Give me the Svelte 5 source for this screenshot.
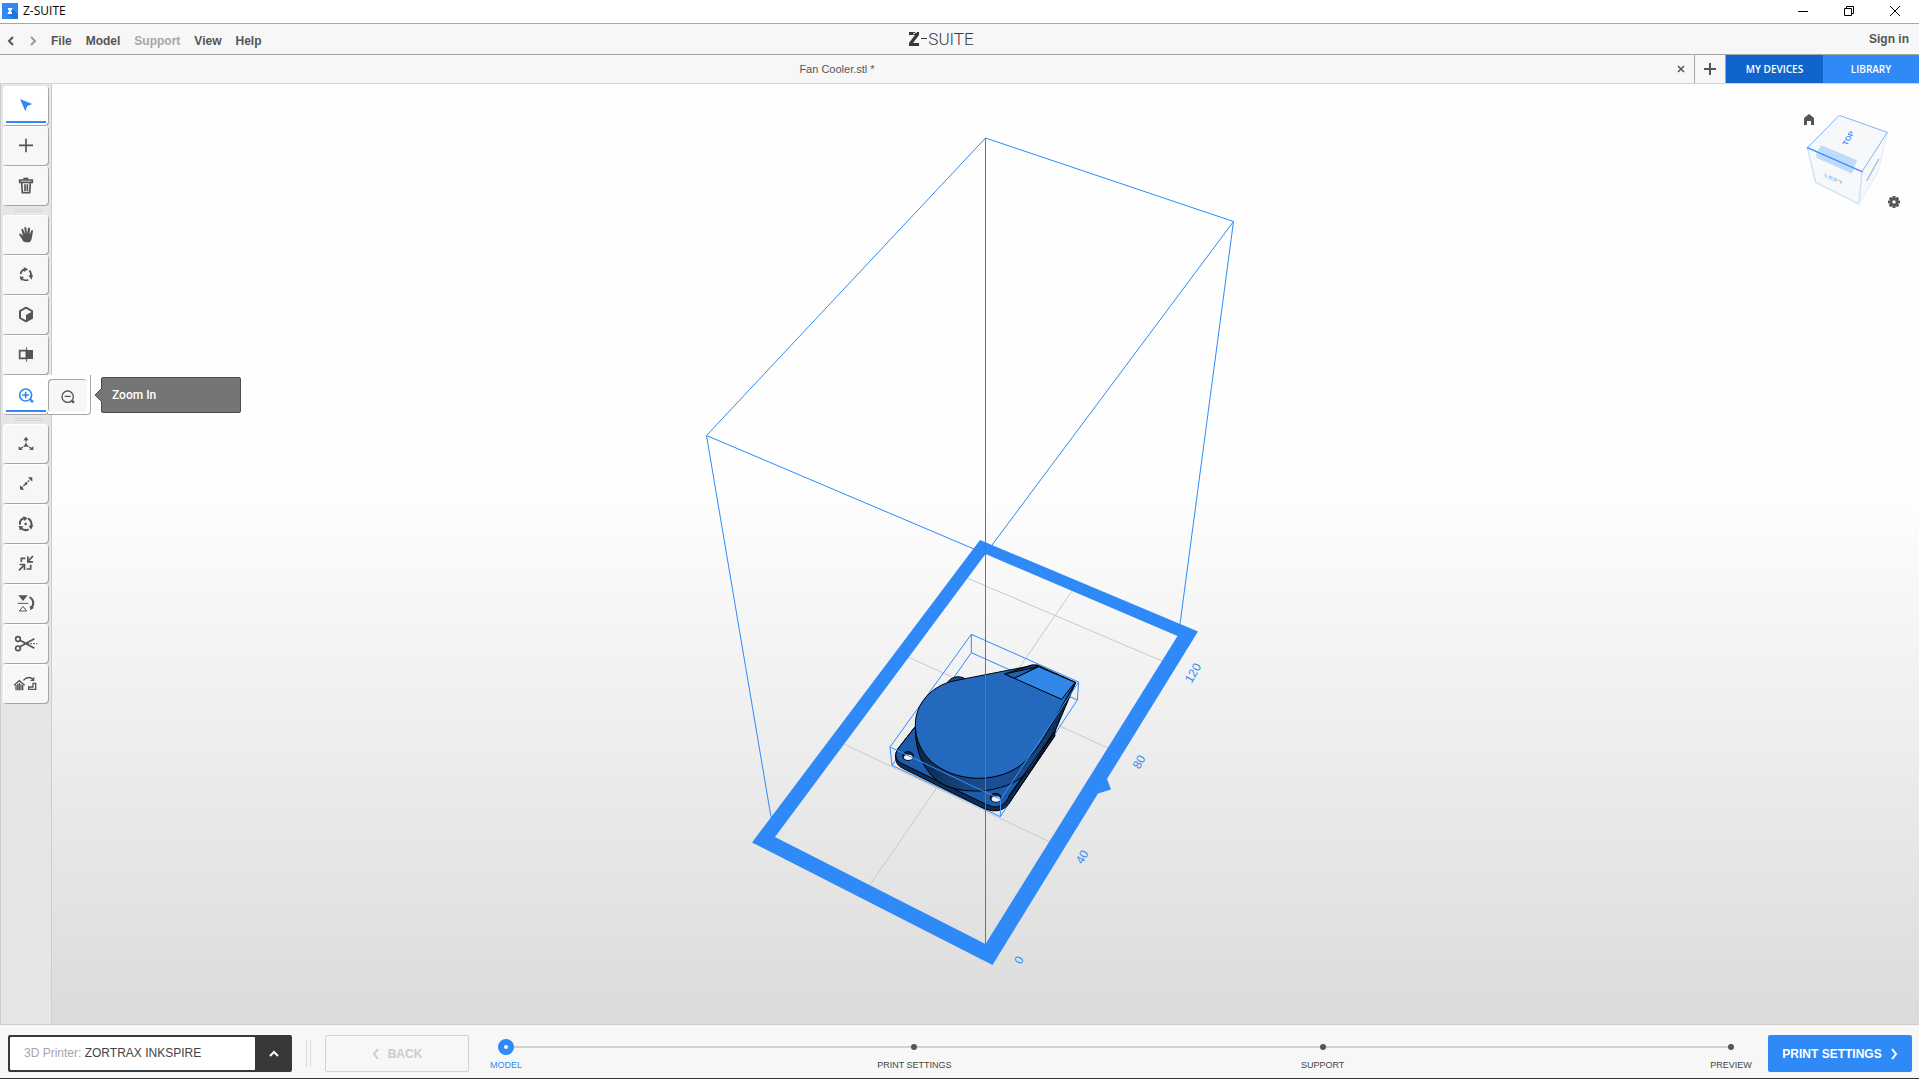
<script lang="ts">
    // icons are drawn on a 138 x 120 grid, three units per pixel
    const icons: Record<string, string> = {
        select: '<path fill="currentColor" d="M51 39L88 54L73 60L67 76Z"/>',
        add: '<path fill="none" stroke="currentColor" stroke-width="5" d="M69 38V79M48 58H90"/>',
        remove: '<path fill="none" stroke="currentColor" stroke-width="5" d="M50 42H88V49H50ZM56 50L58 80H80L82 50M66 55V75M73 55V75"/><path fill="currentColor" d="M61 35H76V41H61Z"/>',
        pan: '<path fill="currentColor" d="M60 78Q54 67 49 60Q47 55 53 56L60 62L55 44Q55 39 60 42L66 57L64 38Q66 33 70 38L72 56L75 39Q79 35 81 40L80 59L85 46Q89 43 90 48L87 66Q86 78 80 82H66Z"/>',
        orbit: '<path fill="none" stroke="currentColor" stroke-width="5" d="M53 57Q54 46 64 43M79 46Q86 53 84 64M76 74Q68 78 58 73"/><path fill="currentColor" d="M62 36L75 43L64 51ZM76 61L90 60L86 74ZM50 64L63 66L54 78Z"/>',
        views: '<path fill="none" stroke="currentColor" stroke-width="6" stroke-linejoin="round" d="M69 38L87 48V69L69 79L51 69V48Z"/><path fill="currentColor" d="M87 50V69L69 79V60Z"/>',
        compare: '<path fill="none" stroke="currentColor" stroke-width="5" d="M50 47H70V70H50Z"/><path fill="currentColor" d="M69 45H90V72H69Z"/><path stroke="currentColor" stroke-width="3" d="M71 37V80"/>',
        zoomIn: '<path fill="none" stroke="currentColor" stroke-width="5" d="M58 60H78M68 50V70M80 72L86 77"/><circle fill="none" stroke="currentColor" stroke-width="5" cx="68" cy="60" r="18"/><path fill="none" stroke="currentColor" stroke-width="8" d="M83 76L90 81"/>',
        zoomOut: '<path fill="none" stroke="currentColor" stroke-width="4" d="M50 52H68M71 64L76 68"/><circle fill="none" stroke="currentColor" stroke-width="4" cx="59" cy="53" r="17"/><path fill="none" stroke="currentColor" stroke-width="7" d="M72 66L78 71"/>',
        move: '<path fill="none" stroke="currentColor" stroke-width="4" stroke-dasharray="6 3" d="M69 62V45M67 65L53 73M71 65L85 73"/><path fill="currentColor" d="M61 49L69 38L77 49ZM47 67V78L60 77ZM91 67V78L78 77Z"/><circle fill="currentColor" cx="69" cy="64" r="4"/>',
        scale: '<path fill="none" stroke="currentColor" stroke-width="4" stroke-dasharray="6 3" d="M55 72L84 44"/><path fill="currentColor" d="M51 64V77H64ZM88 40V53L75 40Z"/><circle fill="currentColor" cx="69" cy="59" r="4"/>',
        rotate: '<path fill="none" stroke="currentColor" stroke-width="6" d="M51 62Q49 46 63 43M75 43Q88 50 85 67M77 76Q65 82 54 73"/><path fill="currentColor" d="M61 36L74 43L63 51ZM77 65L91 64L84 77ZM47 66L61 67L51 80Z"/><circle fill="currentColor" cx="68" cy="60" r="4"/>',
        fit: '<path fill="none" stroke="currentColor" stroke-width="5" d="M55 54V43H67M71 75H83V62M90 36L77 50M48 79L62 65"/><path fill="currentColor" d="M72 37V56H90V51H77V37ZM50 59H67V78H62V64H50Z"/><path fill="currentColor" d="M73 45L84 55H73ZM57 60H66V71Z"/>',
        mirror: '<path fill="currentColor" d="M46 34H74L60 51Z"/><path fill="none" stroke="currentColor" stroke-width="3" d="M44 58H76M49 81H71L60 67Z"/><path fill="none" stroke="currentColor" stroke-width="6" d="M80 39Q98 52 86 71"/><path fill="currentColor" d="M80 65L93 71L82 79Z"/>',
        cut: '<g fill="none" stroke="currentColor" stroke-width="5"><circle cx="45" cy="45" r="7"/><circle cx="45" cy="73" r="7"/><path d="M51 49L94 73M51 68L94 44"/></g><path fill="none" stroke="currentColor" stroke-width="3" stroke-dasharray="6 3" d="M72 59H103"/>',
        align: '<path fill="none" stroke="currentColor" stroke-width="4" d="M33 64L49 50L65 64M39 63V79M44 61V79M49 57V79M54 61V79M59 63V79M61 49Q75 34 91 46M90 58H98V76H77V69H90Z"/><path fill="currentColor" d="M94 38V51H81Z"/>'
    };

    const toolGroups = [
        [
            { id: 'select', label: 'Select' },
            { id: 'add', label: 'Add model' },
            { id: 'remove', label: 'Delete' }
        ],
        [
            { id: 'pan', label: 'Pan' },
            { id: 'orbit', label: 'Orbit' },
            { id: 'views', label: 'Views' },
            { id: 'compare', label: 'Compare' },
            { id: 'zoomIn', label: 'Zoom In' }
        ],
        [
            { id: 'move', label: 'Move' },
            { id: 'scale', label: 'Scale' },
            { id: 'rotate', label: 'Rotate' },
            { id: 'fit', label: 'Fit' },
            { id: 'mirror', label: 'Mirror' },
            { id: 'cut', label: 'Split' },
            { id: 'align', label: 'Auto placement' }
        ]
    ];

    const menu = ['File', 'Model', 'Support', 'View', 'Help'];
    const steps = ['MODEL', 'PRINT SETTINGS', 'SUPPORT', 'PREVIEW'];
    const scaleMarks = [
        { text: '120', x: 1193, y: 673 },
        { text: '80', x: 1139, y: 762 },
        { text: '40', x: 1082, y: 857 },
        { text: '0', x: 1019, y: 960 }
    ];

    let activeTool = $state('select');
    let currentStep = $state(0);
</script>

<div class="app">
    <header class="titlebar">
        <svg class="app-icon" width="16" height="16" viewBox="0 0 16 16">
            <path fill="#2f8af7" d="M0 0H16V16H0Z" />
            <path fill="#2372d6" d="M10 6L16 11V16H11L6 11Z" />
            <path fill="none" stroke="#fff" stroke-width="2" d="M6 6H9L7 10H10" />
        </svg>
        <span class="app-name">Z-SUITE</span>
        <button class="win" aria-label="Minimize">
            <svg width="12" height="12" viewBox="0 0 12 12"><path d="M1 6.5H11" /></svg>
        </button>
        <button class="win" aria-label="Restore">
            <svg width="12" height="12" viewBox="0 0 12 12"><path d="M1.5 3.5H8.5V10.5H1.5ZM3.5 3.5V1.5H10.5V8.5H8.5" /></svg>
        </button>
        <button class="win" aria-label="Close">
            <svg width="12" height="12" viewBox="0 0 12 12"><path d="M1 1L11 11M11 1L1 11" /></svg>
        </button>
    </header>

    <nav class="menubar">
        <div class="menu-side">
            <button class="history" aria-label="Undo">
                <svg width="8" height="12" viewBox="0 0 8 12"><path d="M6 2L2 6L6 10" /></svg>
            </button>
            <button class="history off" aria-label="Redo">
                <svg width="8" height="12" viewBox="0 0 8 12"><path d="M2 2L6 6L2 10" /></svg>
            </button>
            {#each menu as item}
                <button class="menu-item" disabled={item === 'Support'}>{item}</button>
            {/each}
        </div>
        <div class="logo">
            <svg width="11" height="14" viewBox="0 0 11 14">
                <path fill="#383838" d="M0 0H10V3L4 11H10V14H0V11L6 3H0Z" />
                <path stroke="#f7f7f7" d="M4 2L8 0" />
            </svg>
            <svg width="6" height="14" viewBox="0 0 6 14"><path fill="#383838" d="M0 6H6V7H0Z" /></svg>
            <span>SUITE</span>
        </div>
        <div class="menu-side end"><a href="#signin">Sign in</a></div>
    </nav>

    <div class="tabs">
        <button class="tab">Fan Cooler.stl *</button>
        <button class="tab-close" aria-label="Close tab">
            <svg width="8" height="8" viewBox="0 0 8 8"><path d="M1 1L7 7M7 1L1 7" /></svg>
        </button>
        <button class="tab-add" aria-label="New tab">
            <svg width="12" height="12" viewBox="0 0 12 12"><path d="M6 0V12M0 6H12" /></svg>
        </button>
        <button class="devices">MY DEVICES</button>
        <button class="library">LIBRARY</button>
    </div>

    <main>
        <aside>
            {#each toolGroups as group}
                <div class="group">
                    {#each group as tool}
                        <div class="slot">
                            <button
                                class="tool"
                                class:active={tool.id === activeTool || tool.id === 'zoomIn'}
                                aria-label={tool.label}
                                onclick={() => (activeTool = tool.id)}
                            >
                                <svg width="46" height="40" viewBox="0 0 138 120">{@html icons[tool.id]}</svg>
                            </button>
                            {#if tool.id === 'zoomIn'}
                                <div class="flyout">
                                    <button aria-label="Zoom Out">
                                        <svg width="39" height="33" viewBox="0 0 117 99">{@html icons.zoomOut}</svg>
                                    </button>
                                </div>
                                <div class="tooltip" role="tooltip">
                                    <svg width="8" height="14" viewBox="0 0 8 14"><path fill="#757575" stroke="#4c4c4c" d="M8 0L1 7L8 14" /></svg>
                                    Zoom In
                                </div>
                            {/if}
                        </div>
                    {/each}
                </div>
            {/each}
        </aside>

        <section class="viewport">
            <svg class="scene" viewBox="52 84 1867 940">
                <g fill="none" stroke="#c9c9c9">
                    <path d="M967 578L1162 661M908 657L1108 748M844 744L1050 842M1072 591L870 885" />
                </g>

                <path fill="none" stroke="#2f8af7" d="M974 549L706.5 435.5L985.5 138L1233.5 221.5L992 545M706.5 435.5L771 817M1233.5 221.5L1180 624" />
                <path fill="#2f8af7" fill-rule="evenodd" d="M980 540L1198 631.500L1107 779L1111 789.500L1098 793.500L992.500 965L752 842.500ZM985.500 554L775 837L985.500 944L1177.500 636Z" />

                <!-- fan cooler, three units per pixel -->
                <g transform="translate(870 610) scale(.33333)" stroke-linejoin="round">
                    <path fill="none" stroke="#2f8af7" stroke-width="3" d="M60 411L304 73L626 216L622 270L304 128V73M304 128L66 466L60 411M66 466L391 620L622 270" />
                    <path fill="#1a5099" stroke="#000" stroke-width="3" d="M228 224Q240 201 264 200Q280 200 290 210Z" />
                    <path fill="#0d2d58" stroke="#000" stroke-width="3" d="M134 352L84 416Q70 438 82 462Q88 470 98 475L345 597Q392 614 416 582L553 378L560 340L617 218L400 300Z" />
                    <path fill="#1d5cab" stroke="#000" stroke-width="3" d="M134 352L84 416Q68 440 90 458L350 584Q388 602 408 574L500 440L300 300Z" />
                    <linearGradient id="rim" x1="0" x2="1" y1="0" y2="0">
                        <stop offset="0" stop-color="#0b2447" />
                        <stop offset=".3" stop-color="#17457f" />
                        <stop offset=".5" stop-color="#1a5099" />
                        <stop offset=".75" stop-color="#174580" />
                        <stop offset="1" stop-color="#091a33" />
                    </linearGradient>
                    <path fill="url(#rim)" stroke="#000" stroke-width="3" d="M136 350C136 410 150 470 205 515C250 545 320 548 370 538C430 525 465 500 490 465L556 362L617 218L500 380L300 480Z" />
                    <path fill="#2369bd" stroke="#000" stroke-width="3" d="M500 164L617 217L540 350C500 420 455 506 320 505C205 500 136 430 136 345C136 280 185 228 250 213Z" />
                    <path fill="#143d74" stroke="#000" stroke-width="3" d="M404 192L488 164L506 170L433 205Z" />
                    <path fill="#1f62b2" stroke="#000" stroke-width="3" d="M404 192L506 170L433 205Z" />
                    <path fill="#3286e8" stroke="#000" stroke-width="3" d="M506 170L433 205L575 268L615 217Z" />
                    <path fill="none" stroke="#000" stroke-width="3" d="M415 560L555 362M422 572L556 376" />
                    {#each [[114, 438], [377, 563]] as [cx, cy]}
                        <ellipse {cx} {cy} rx="16" ry="13" fill="#0d2d58" stroke="#000" stroke-width="3" />
                        <ellipse cx={cx + 1} cy={cy + 4} rx="13" ry="8" fill="#f2f2f2" />
                    {/each}
                    <path fill="none" stroke="#3a91fa" stroke-width="3" d="M60 411L392 568L391 620M392 568L626 216" />
                </g>

                <path stroke="#2f7fe0" d="M985.500 138V944" />
                {#each scaleMarks as mark}
                    <text class="mark" text-anchor="middle" transform="translate({mark.x} {mark.y}) rotate(-60)" y="4">{mark.text}</text>
                {/each}
            </svg>

            <div class="navcube">
                <svg width="110" height="100" viewBox="477 330 330 300">
                    <path fill="#f7f8fa" d="M598 346L742 397L716 520L657 612L527 547L502 443Z" />
                    <path fill="#bedbfc" d="M544 436L651 481L636 521L529 473V458Z" />
                    <g fill="none" stroke-linecap="round">
                        <path stroke="#c8e0fc" stroke-width="4" d="M502 443L527 547L657 612L666 515" />
                        <path stroke="#e6f0fd" stroke-width="4" d="M742 397L716 510L657 612" />
                        <path stroke="#7db5fa" stroke-width="3" d="M502 443L598 346L742 397L666 515" />
                        <path stroke="#3a8ff5" stroke-width="4" d="M502 443L666 515" />
                        <path stroke="#a5bfe2" stroke-width="4" d="M681 541L716 478" />
                    </g>
                    <text class="face" transform="matrix(.5 -.85 .9 .35 620 437)" font-size="23">TOP</text>
                    <text class="face light" transform="matrix(.95 .45 .1 .7 554 530)" font-size="23">LEFT</text>
                </svg>
                <button class="home" aria-label="Home view">
                    <svg width="10" height="11" viewBox="0 0 10 11"><path fill="#555" d="M5 0L10 4V11H7V7H3V11H0V4Z" /></svg>
                </button>
                <button class="gear" aria-label="View settings">
                    <svg width="12" height="12" viewBox="-6 -6 12 12">
                        {#each [0, 45, 90, 135] as angle}
                            <path stroke="#555" stroke-width="3" d="M0 -6V-3M0 3V6" transform="rotate({angle})" />
                        {/each}
                        <circle r="3" fill="none" stroke="#555" stroke-width="2.500" />
                    </svg>
                </button>
            </div>
        </section>
    </main>

    <footer>
        <button class="printer">
            <span class="printer-name"><i>3D Printer:</i> ZORTRAX INKSPIRE</span>
            <svg width="10" height="8" viewBox="0 0 10 8"><path d="M1 6L5 2L9 6" /></svg>
        </button>
        <div class="split"></div>
        <button class="back" disabled>
            <svg width="8" height="12" viewBox="0 0 8 12"><path d="M6 1L2 6L6 11" /></svg>
            BACK
        </button>
        <ol class="steps">
            {#each steps as step, i}
                <li class:current={i === currentStep}>
                    <button onclick={() => (currentStep = i)}>
                        <span class="dot-row"><span class="dot"></span></span>
                        {step}
                    </button>
                </li>
            {/each}
        </ol>
        <button class="next">
            PRINT SETTINGS
            <svg width="8" height="12" viewBox="0 0 8 12"><path d="M2 1L6 6L2 11" /></svg>
        </button>
    </footer>
</div>

<style>
:global(body) {
    margin: 0;
}

.app {
    display: flex;
    flex-direction: column;
    height: 100vh;
    background: #f7f7f7;
    color: #555;
    font: 12px/16px "Liberation Sans", Arial, sans-serif;
}

button {
    margin: 0;
    padding: 0;
    border: 0;
    background: none;
    color: inherit;
    font: inherit;
    cursor: pointer;
}

svg {
    display: block;
    flex: none;
}

.titlebar {
    display: flex;
    align-items: center;
    height: 22px;
    padding: 0 1px 1px 0;
    background: #fff;
    border-bottom: 1px solid #a6a6a6;
    color: #000;
}

.app-icon {
    margin: 0 5px 0 2px;
}

.app-name {
    flex: 1;
    font-family: "Open Sans", "Noto Sans", sans-serif;
}

.win {
    display: flex;
    align-items: center;
    justify-content: center;
    width: 46px;
    height: 20px;
}

.win svg path {
    fill: none;
    stroke: #000;
}

.menubar {
    display: flex;
    align-items: center;
    height: 30px;
    border-bottom: 1px solid #a6a6a6;
    font-weight: bold;
}

.menu-side {
    display: flex;
    flex: 1;
    align-items: center;
    gap: 14px;
    padding: 3px 10px 0 7px;
}

.menu-side.end {
    justify-content: flex-end;
    padding-top: 0;
}

.menu-side a {
    color: inherit;
    text-decoration: none;
}

.menu-item:disabled {
    color: #a6a6a6;
}

.history path {
    fill: none;
    stroke: #555;
    stroke-width: 2;
}

.history.off path {
    stroke: #999;
}

.logo {
    display: flex;
    align-items: center;
    gap: 1px;
    margin-right: 36px;
    color: #383838;
    font: 17px/20px Roboto, "Liberation Sans", sans-serif;
    font-weight: 300;
}

.tabs {
    display: flex;
    height: 28px;
    border-bottom: 1px solid #d2d2d2;
}

.tab {
    flex: 1;
    font-size: 11px;
}

.tab-close,
.tab-add {
    display: flex;
    align-items: center;
    justify-content: center;
    width: 20px;
}

.tab-close {
    padding-right: 6px;
}

.tab-close path,
.tab-add path {
    stroke: #555;
    stroke-width: 2;
}

.tab-close path {
    stroke-width: 1.5;
}

.tab-add {
    width: 32px;
    border-left: 1px solid #a6a6a6;
    border-right: 1px solid #a6a6a6;
}

.devices,
.library {
    width: 97px;
    background: #1064cc;
    color: #fff;
    font: 600 10px/16px "Open Sans", "Noto Sans", sans-serif;
}

.library {
    width: 96px;
    background: #2f8af7;
}

main {
    display: flex;
    flex: 1;
    min-height: 0;
}

aside {
    position: relative;
    z-index: 1;
    width: 48px;
    padding: 2px 0 0 2px;
    background: #e6e6e6;
    border: 1px solid #ccc;
    border-top: 0;
}

.group + .group::before {
    content: "";
    display: block;
    width: 28px;
    height: 1px;
    margin: 3px 0 3px 12px;
    border-top: 1px solid #d6d6d6;
    border-bottom: 1px solid #d6d6d6;
}

.slot {
    position: relative;
    height: 40px;
}

.tool {
    position: relative;
    display: block;
    background: #f7f7f7;
    border-radius: 4px;
    box-shadow: inset -1px -1px 0 #a6a6a6, inset 1px 1px 0 #fff;
}

.tool.active {
    background: #fff;
    color: #2f8af7;
}

.tool.active::after {
    content: "";
    position: absolute;
    left: 3px;
    right: 3px;
    bottom: 3px;
    height: 2px;
    background: #2f8af7;
}

.flyout {
    position: absolute;
    left: 45px;
    top: 0;
    padding: 4px 3px 2px 0;
    background: #fff;
    border-right: 1px solid #a6a6a6;
    border-bottom: 1px solid #a6a6a6;
    border-radius: 0 0 4px 0;
}

.flyout button {
    display: block;
    background: #f7f7f7;
    border-radius: 4px;
    box-shadow: inset 1px 1px 0 #a6a6a6;
}

.tooltip {
    position: absolute;
    left: 98px;
    top: 2px;
    z-index: 1;
    width: 128px;
    padding: 9px 0 9px 10px;
    background: #757575;
    border: 1px solid #4c4c4c;
    border-radius: 2px;
    color: #fff;
    font: 500 12px/16px Roboto, "Liberation Sans", sans-serif;
}

.tooltip svg {
    position: absolute;
    left: -8px;
    top: 10px;
}

.viewport {
    position: relative;
    flex: 1;
    min-width: 0;
    background: linear-gradient(#fefefe 43%, #dbdbdb);
    border-bottom: 1px solid #ccc;
}

.scene {
    width: 100%;
    height: 100%;
}

.mark {
    fill: #2f8af7;
    font-size: 12px;
}

.navcube {
    position: absolute;
    top: 26px;
    right: 10px;
}

.face {
    fill: #4a97f5;
    font-weight: bold;
}

.face.light {
    fill: #93c0f8;
}

.home,
.gear {
    position: absolute;
    display: flex;
    align-items: center;
    justify-content: center;
    width: 20px;
    height: 20px;
}

.home {
    left: 0;
    top: -1px;
}

.gear {
    right: 5px;
    bottom: -2px;
}

footer {
    display: flex;
    padding: 10px 7px 6px 8px;
    border-bottom: 1px solid #333;
}

footer path {
    fill: none;
    stroke: currentColor;
    stroke-width: 2;
}

.printer {
    display: flex;
    align-items: center;
    width: 284px;
    height: 37px;
    padding: 2px 13px 2px 2px;
    background: #383838;
    border-radius: 2px;
    color: #fff;
    text-align: left;
}

.printer-name {
    flex: 1;
    margin-right: 14px;
    padding-left: 14px;
    background: #fff;
    border-radius: 1px;
    color: #444;
    line-height: 33px;
}

.printer-name i {
    color: #a6a6a6;
    font-style: normal;
}

.split {
    width: 3px;
    height: 27px;
    margin: 5px 14px;
    border-left: 1px solid #ddd;
    border-right: 1px solid #ddd;
}

.back,
.next {
    display: flex;
    align-items: center;
    justify-content: center;
    gap: 8px;
    width: 144px;
    height: 37px;
    border-radius: 2px;
    font-weight: bold;
}

.back {
    border: 1px solid #d2d2d2;
    color: #ccc;
}

.next {
    background: #2f8af7;
    color: #fff;
}

.steps {
    position: relative;
    display: flex;
    flex: 1;
    justify-content: space-between;
    height: 37px;
    margin: 0 29px;
    padding: 0;
    list-style: none;
}

.steps::before {
    content: "";
    position: absolute;
    left: 8px;
    right: 8px;
    top: 11px;
    height: 2px;
    background: #d0d0d0;
}

.steps li {
    position: relative;
    display: flex;
    justify-content: center;
    width: 16px;
    color: #444;
}

.steps button {
    flex: none;
    display: flex;
    flex-direction: column;
    align-items: center;
    font-size: 9px;
    line-height: 12px;
    white-space: nowrap;
}

.dot-row {
    display: flex;
    align-items: center;
    height: 24px;
}

.dot {
    width: 6px;
    height: 6px;
    border-radius: 50%;
    background: #555;
}

.steps .current {
    color: #2f8af7;
}

.current .dot {
    width: 4px;
    height: 4px;
    border: 6px solid #2f8af7;
    background: #fff;
}
</style>
